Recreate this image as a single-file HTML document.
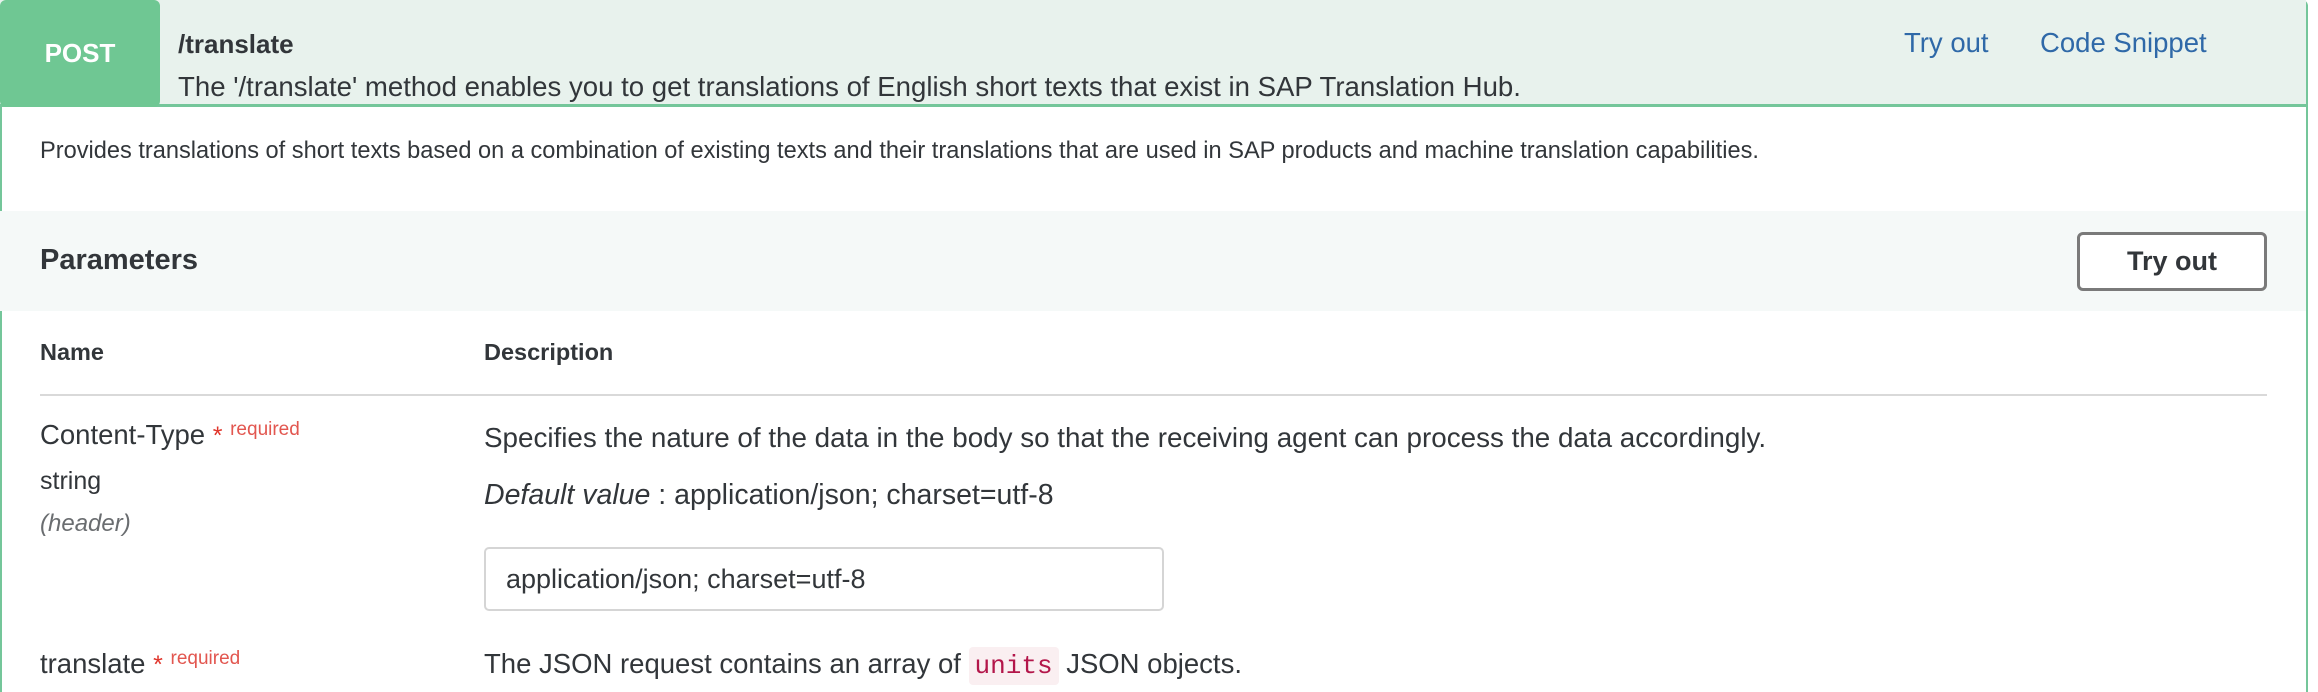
<!DOCTYPE html>
<html><head><meta charset="utf-8"><style>
*{margin:0;padding:0;box-sizing:border-box}
html,body{width:2318px;height:692px;overflow:hidden}
body{background:#fff;font-family:"Liberation Sans",sans-serif;color:#32363a;position:relative}
.wrap{position:absolute;left:0;top:0;width:2308px;height:692px;border:2px solid #74c69a;border-bottom:none;border-radius:6px 6px 0 0}
.hdr{position:absolute;left:0;top:0;width:2306px;height:107px;background:#e8f2ed;border-bottom:3px solid #74c69a}
.post{position:absolute;left:0;top:0;width:160px;height:107px;background:#6fc793;border-radius:6px;color:#fff;font-weight:bold;font-size:26px;line-height:107px;text-align:center}
.abs{position:absolute;white-space:nowrap}
.a{color:#2f69a8;font-size:27.5px}
.band{position:absolute;left:0;top:211px;width:2306px;height:100px;background:#f5f9f8}
.btn{position:absolute;left:2077px;top:232px;width:190px;height:59px;border:3px solid #7a7a7a;border-radius:6px;font-weight:bold;font-size:27px;text-align:center;line-height:53px;background:#fff}
.req{color:#e2564f;font-size:19px;vertical-align:top}
.star{color:#e0352b;font-size:25px}
.inp{position:absolute;left:484px;top:547px;width:680px;height:64px;border:2px solid #d5d5d5;border-radius:5px;font-size:27px;line-height:60px;padding-left:20px}
code{font-family:"Liberation Mono",monospace;color:#b3164a;background:#faeff1;padding:4px 6px;border-radius:4px;font-size:26px}
</style></head><body>
<div class="wrap"></div>
<div class="hdr"></div>
<div class="post">POST</div>
<div class="abs" style="left:178px;top:29px;font-weight:bold;font-size:26px">/translate</div>
<div class="abs" style="left:178px;top:71px;font-size:27.6px">The '/translate' method enables you to get translations of English short texts that exist in SAP Translation Hub.</div>
<div class="abs a" style="left:1904px;top:27px">Try out</div>
<div class="abs a" style="left:2040px;top:27px">Code Snippet</div>
<div class="abs" style="left:40px;top:138px;font-size:23.6px">Provides translations of short texts based on a combination of existing texts and their translations that are used in SAP products and machine translation capabilities.</div>
<div class="band"></div>
<div class="abs" style="left:40px;top:244px;font-weight:bold;font-size:29px">Parameters</div>
<div class="btn">Try out</div>
<div class="abs" style="left:40px;top:339px;font-weight:bold;font-size:23.5px">Name</div>
<div class="abs" style="left:484px;top:339px;font-weight:bold;font-size:23.5px">Description</div>
<div class="abs" style="left:40px;top:394px;width:2227px;height:2px;background:#d9d9d9"></div>
<div class="abs" style="left:40px;top:419px;font-size:27.5px">Content-Type <span class="star">*</span> <span class="req">required</span></div>
<div class="abs" style="left:40px;top:467px;font-size:25px">string</div>
<div class="abs" style="left:40px;top:510px;font-size:24px;font-style:italic;color:#6a6d70">(header)</div>
<div class="abs" style="left:484px;top:422px;font-size:27.8px">Specifies the nature of the data in the body so that the receiving agent can process the data accordingly.</div>
<div class="abs" style="left:484px;top:479px;font-size:28.5px"><i>Default value</i> : application/json; charset=utf-8</div>
<div class="inp">application/json; charset=utf-8</div>
<div class="abs" style="left:40px;top:648px;font-size:27.5px">translate <span class="star">*</span> <span class="req">required</span></div>
<div class="abs" style="left:484px;top:648px;font-size:27.5px">The JSON request contains an array of <code>units</code> JSON objects.</div>
</body></html>
